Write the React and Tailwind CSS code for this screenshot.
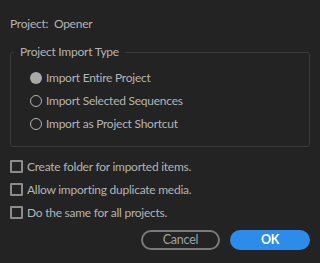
import React, { useState } from 'react';

function Radio({ checked, label }) {
  return (
    <div className="flex items-center h-[23px] gap-[4px]">
      {checked ? (
        <span className="w-[12px] h-[12px] rounded-full bg-[#a9a9a9]" />
      ) : (
        <span className="w-[12px] h-[12px] rounded-full border-[1.5px] border-[#b3b3b3]" />
      )}
      <span>{label}</span>
    </div>
  );
}

function Check({ label }) {
  return (
    <div className="flex items-center h-[23px] gap-[4px]">
      <span className="w-[13px] h-[13px] rounded-[1px] border-2 border-[#8c8c8c]" />
      <span>{label}</span>
    </div>
  );
}

export default function App() {
  const [mode] = useState('entire');

  return (
    <div
      className="w-[320px] h-[263px] bg-[#232323] text-[#b4b4b4] text-[12px] tracking-[-0.25px] leading-[16px] px-[10px] pt-[16px] overflow-hidden"
      style={{ fontFamily: 'Lato, "Noto Sans", sans-serif' }}
    >
      <div>Project:&nbsp; Opener</div>

      <fieldset className="mt-[12px] border border-[#3b3b3b] rounded-[3px] w-[300px]">
        <legend className="ml-[3px] px-[6px]">Project Import Type</legend>
        <div className="pl-[19px] pt-[6px] pb-[11px]">
          <Radio checked={mode === 'entire'} label="Import Entire Project" />
          <Radio checked={mode === 'selected'} label="Import Selected Sequences" />
          <Radio checked={mode === 'shortcut'} label="Import as Project Shortcut" />
        </div>
      </fieldset>

      <div className="mt-[8px]">
        <Check label="Create folder for imported items." />
        <Check label="Allow importing duplicate media." />
        <Check label="Do the same for all projects." />
      </div>

      <div className="flex justify-end gap-[10px] mt-[6px]">
        <button className="w-[79px] h-[20px] rounded-full border-2 border-[#7a7a7a] text-[#a0a0a0] text-[12.5px] flex items-center justify-center">
          Cancel
        </button>
        <button className="w-[80px] h-[20px] rounded-full bg-[#2d8ceb] text-white text-[12.5px] font-bold flex items-center justify-center">
          OK
        </button>
      </div>
    </div>
  );
}
